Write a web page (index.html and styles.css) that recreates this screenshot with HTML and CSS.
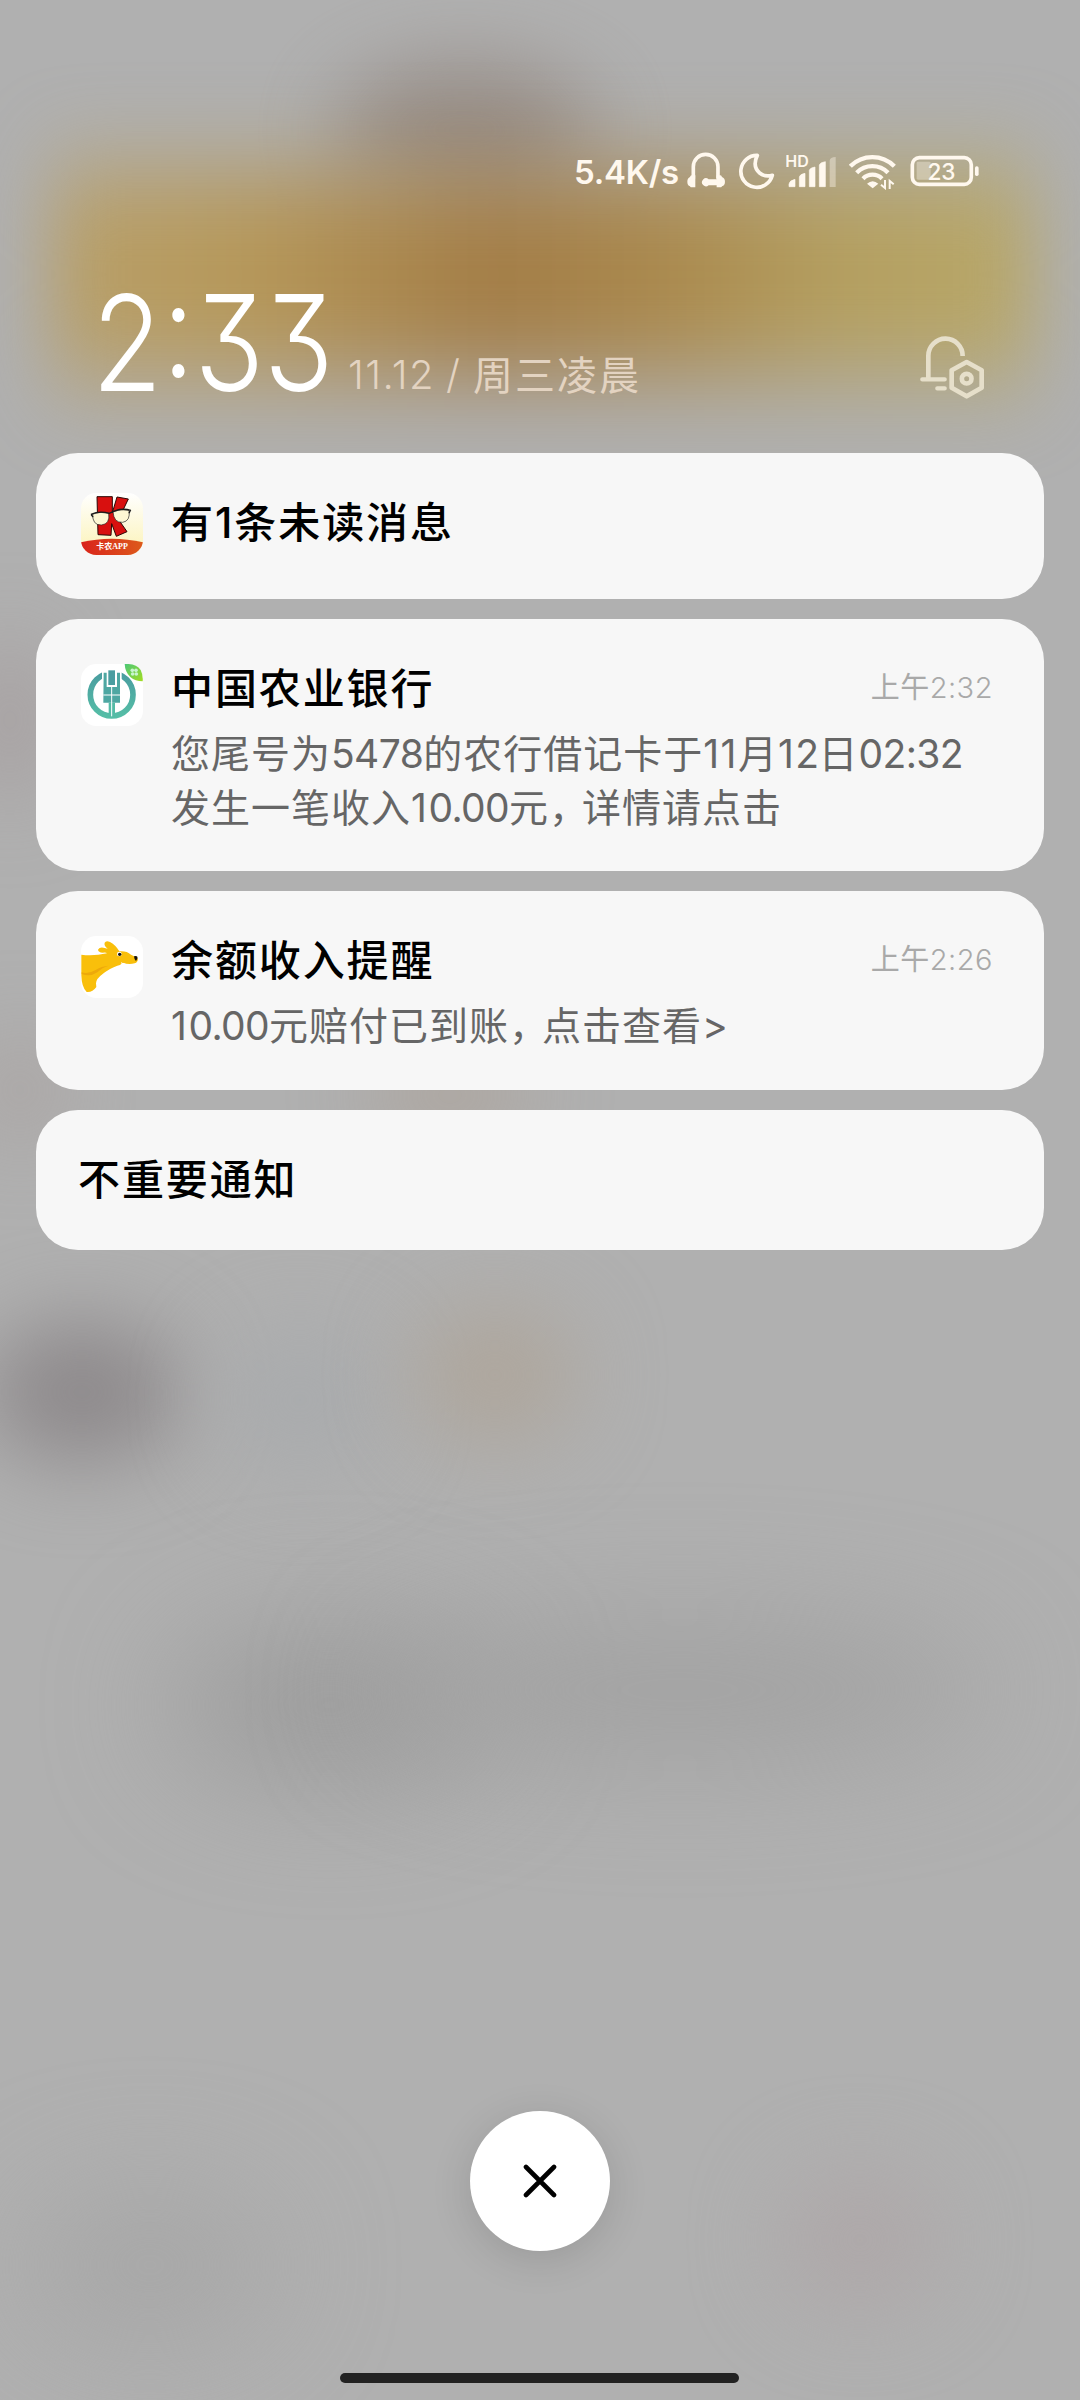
FILE: index.html
```html
<!DOCTYPE html>
<html lang="zh-CN">
<head>
<meta charset="utf-8">
<title>通知中心</title>
<link rel="stylesheet" href="styles.css">
</head>
<body>
<div class="screen">
  <svg class="backdrop" viewBox="0 0 1080 2400" aria-hidden="true">
    <defs>
      <filter id="soft" x="-150%" y="-150%" width="400%" height="400%" color-interpolation-filters="sRGB"><feGaussianBlur stdDeviation="42"/></filter>
      <filter id="softer" x="-150%" y="-200%" width="400%" height="500%" color-interpolation-filters="sRGB"><feGaussianBlur stdDeviation="60"/></filter>
      <filter id="band" x="-50%" y="-100%" width="200%" height="300%" color-interpolation-filters="sRGB"><feGaussianBlur stdDeviation="34 46"/></filter>
      <linearGradient id="gold" x1="0" x2="1" y1="0" y2="0">
        <stop offset="0" stop-color="#b8a06a"/><stop offset=".2" stop-color="#b6985a"/>
        <stop offset=".45" stop-color="#a37d47"/><stop offset=".62" stop-color="#aa894e"/>
        <stop offset=".8" stop-color="#b49f60"/><stop offset="1" stop-color="#b8a86a"/>
      </linearGradient>
    </defs>
    <rect width="1080" height="2400" fill="#b0b0b0"/>
    <ellipse cx="465" cy="130" rx="130" ry="65" fill="#8f837b" opacity=".8" filter="url(#soft)"/>
    <rect x="50" y="172" width="985" height="205" fill="url(#gold)" filter="url(#band)"/>
    <ellipse cx="10" cy="720" rx="30" ry="80" fill="#a39a9b" filter="url(#soft)"/>
    <ellipse cx="20" cy="1090" rx="30" ry="50" fill="#a8a09e" filter="url(#soft)"/>
    <ellipse cx="450" cy="1095" rx="80" ry="20" fill="#aa9a8c" filter="url(#soft)"/>
    <ellipse cx="82" cy="1392" rx="100" ry="70" fill="#8d898b" filter="url(#soft)"/>
    <ellipse cx="300" cy="1400" rx="80" ry="70" fill="#a9abad" filter="url(#soft)"/>
    <ellipse cx="495" cy="1375" rx="80" ry="70" fill="#aea69c" filter="url(#soft)"/>
    <ellipse cx="330" cy="1705" rx="160" ry="75" fill="#9c9c9c" filter="url(#softer)"/>
    <ellipse cx="680" cy="1690" rx="310" ry="65" fill="#a1a1a1" filter="url(#softer)"/>
    <ellipse cx="150" cy="2265" rx="120" ry="70" fill="#a6a6a6" filter="url(#softer)"/>
    <ellipse cx="860" cy="2240" rx="80" ry="70" fill="#aea8a9" filter="url(#soft)"/>
  </svg>

  <header class="status">
    <span class="speed">5.4K/s</span>
    <svg class="ic headset" viewBox="380 60 115 120">
      <path d="M399 146V110a37 37 0 0 1 74 0V146" fill="none" stroke="#fff8ee" stroke-width="11"/>
      <path d="M405 136v36h-13q-2 0-3-3q-8-3-8-14t8-14q1-5 5-5z" fill="#fff8ee"/>
      <path d="M469 136v12h-24a12 12 0 1 0 0 18h24v6h13q2 0 3-3q9-3 9-14t-9-14q-1-5-5-5z" fill="#fff8ee"/>
    </svg>
    <svg class="ic moon" viewBox="537 60 108 120">
      <path d="M592 76a48 48 0 1 0 45 60q-22 6-38-7-23-20-7-53z" fill="none" stroke="#fff8ee" stroke-width="11" stroke-linejoin="round"/>
    </svg>
    <svg class="ic signal" viewBox="678 60 152 120">
      <text x="676" y="112" class="hd">HD</text>
      <path d="M687 170v-8q1-10 18-14v22zM718 170v-29q1-8 17-11v40zM748 170v-49q2-8 17-10v59zM778 170v-65q2-8 18-10v75z" fill="#fff8ee" stroke="#fff8ee" stroke-width="2" stroke-linejoin="round"/>
      <path d="M809 171V92q1-11 18-11v90z" fill="#fff8ee" opacity=".4"/>
    </svg>
    <svg class="ic wifi" viewBox="866 60 140 120">
      <g fill="none" stroke="#fff8ee" stroke-width="13">
        <path d="M870 109a93 93 0 0 1 132 0"/>
        <path d="M889 128a66 66 0 0 1 94 0"/>
        <path d="M908 146a40 40 0 0 1 57 0"/>
      </g>
      <path d="M920 161q17-15 34 0l-17 14z" fill="#fff8ee"/>
      <path d="M974 150v24l-12-10M988 177v-24l12 10" fill="none" stroke="#fff8ee" stroke-width="6"/>
    </svg>
    <svg class="ic battery" viewBox="1048 60 208 120">
      <rect x="1068" y="95" width="42" height="54" rx="4" fill="#fff8ee" opacity=".35"/>
      <rect x="1055" y="83" width="177" height="80" rx="21" fill="none" stroke="#fff8ee" stroke-width="11"/>
      <rect x="1243" y="109" width="11" height="29" rx="5" fill="#fff8ee"/>
      <text x="1142" y="150" text-anchor="middle" class="level">23</text>
    </svg>
  </header>

  <section class="heading">
    <div class="clock"><span class="clock-text">2:33</span></div>
    <div class="date"><span class="d-num">11.12</span><span class="d-slash">/</span><span>周三凌晨</span></div>
    <svg class="bell" viewBox="60 48 195 192" fill="none" stroke="#e6dfca" stroke-width="14">
      <path d="M85 178V107a48 48 0 0 1 103 1" stroke-linejoin="round"/>
      <path d="M67 178H134M112 205H134" stroke-linecap="round" stroke-width="13"/>
      <path d="M200 126l45 25v52l-45 26-45-26v-52z" stroke-linejoin="round"/>
      <circle cx="200" cy="176" r="14.500"/>
    </svg>
  </section>

  <main class="list">
    <article class="card first">
      <svg class="app" viewBox="154 160 186 186">
        <defs>
          <linearGradient id="cream" x1="0" x2="0" y1="0" y2="1"><stop offset="0" stop-color="#fff"/><stop offset=".8" stop-color="#fcf5c4"/></linearGradient>
          <linearGradient id="flame" x1="0" x2="1" y1="0" y2="0"><stop offset="0" stop-color="#d9231b"/><stop offset="1" stop-color="#dd5a1c"/></linearGradient>
          <clipPath id="tile"><rect x="154" y="160" width="186" height="186" rx="46"/></clipPath>
        </defs>
        <g clip-path="url(#tile)">
          <rect x="154" y="160" width="186" height="186" fill="url(#cream)"/>
          <path d="M154 308q92-22 186 0v40H154z" fill="url(#flame)"/>
          <path d="M202 171h46v48l14-47 34 6-22 46-10 12 28 40-32 14-14-38-2 35-39-2z" fill="#d8100f" stroke="#2b0705" stroke-width="3"/>
          <g fill="#fdf8d4" stroke="#222" stroke-width="2">
            <path d="M189 223q24-9 48-2q5 32-22 35q-27 1-26-33z"/>
            <path d="M250 216q24-10 48-4q5 32-19 36q-27 2-29-32z"/>
          </g>
          <path d="M184 224q26-12 55-3l11-5q27-12 53-4M184 224l6 8M303 210l-5 11" fill="none" stroke="#1b1b1b" stroke-width="4"/>
          <text x="247" y="329" text-anchor="middle" class="logo-text">卡农APP</text>
        </g>
      </svg>
      <div class="body"><h2 class="title">有<span class="one">1</span>条未读消息</h2></div>
    </article>

    <article class="card">
      <svg class="app" viewBox="154 163 186 186">
        <defs>
          <linearGradient id="teal" x1="0" x2="0" y1="0" y2="1"><stop offset="0" stop-color="#4a9da0"/><stop offset="1" stop-color="#55bda6"/></linearGradient>
          <linearGradient id="leaf" x1="0" x2="1" y1="0" y2="1"><stop offset="0" stop-color="#4cc878"/><stop offset="1" stop-color="#a2dc22"/></linearGradient>
        </defs>
        <rect x="154" y="163" width="186" height="186" rx="46" fill="#fff"/>
        <circle cx="246" cy="255" r="64" fill="none" stroke="url(#teal)" stroke-width="17"/>
        <path d="M217 176h59v56h-59z" fill="#fff"/>
        <path d="M222 189h9v43h31v-43h9v90h-50z" fill="#4ea7a2"/>
        <rect x="236" y="182" width="20" height="44" fill="#4a9da0"/>
        <path d="M237 279h19v42h-19z" fill="#54bba6"/>
        <path d="M221 256h50M246 232v88" stroke="#fff" stroke-width="3"/>
        <path d="M285 163q34-2 48 18q8 16 6 34q-22 0-37-13q-16-15-17-39z" fill="url(#leaf)"/>
        <g fill="#c9f5cf"><circle cx="308" cy="182" r="5.500"/><circle cx="319" cy="182" r="5.500"/><circle cx="309" cy="193" r="5.500"/><circle cx="320" cy="193" r="5.500"/></g>
      </svg>
      <div class="body">
        <div class="row"><h2 class="title">中国农业银行</h2><time class="time">上午<span>2:32</span></time></div>
        <p class="text">您尾号为<span class="num">5478</span>的农行借记卡于<span class="num"><b>11</b></span>月<span class="num"><b>1</b>2</span>日<span class="num">02:32</span><br>发生一笔收入<span class="num"><b>1</b>0.00</span>元<span class="comma">，</span>详情请点击</p>
      </div>
    </article>

    <article class="card">
      <svg class="app" viewBox="32 48 186 186">
        <rect x="32" y="48" width="186" height="186" rx="46" fill="#fff"/>
        <path d="M33 105q35 5 77-4-3-4-13-2-13-1-14-9 5-9 20-5l9 2q-12-9-9-18 4-8 16-2 18 10 28 28 22-2 35 10 17 7 21 12 0 10-10 14-18 5-36-2-7 8-16 9-26 9-45 26-18 13-19 27l1 11q-12 17-29 15-15-14-16-50z" transform="translate(0 -1)" fill="#f9bf0b"/>
        <path d="M34 157q20 6 42-7 18-12 39-13-22 7-34 20-22 15-47 5z" fill="#eda90a"/>
        <path d="M191 109q13-3 10 7l-4 7q-6-6-6-14z" fill="#17120b"/>
        <circle cx="147" cy="102" r="7" fill="#fff"/><circle cx="148" cy="103" r="5" fill="#151515"/>
        <path d="M152 128q5 5 13 4" fill="none" stroke="#fff" stroke-width="3"/>
      </svg>
      <div class="body">
        <div class="row"><h2 class="title">余额收入提醒</h2><time class="time">上午<span>2:26</span></time></div>
        <p class="text"><span class="num"><b>1</b>0.00</span>元赔付已到账<span class="comma">，</span>点击查看<span class="num">&gt;</span></p>
      </div>
    </article>

    <article class="card plain"><h2 class="title">不重要通知</h2></article>
  </main>

  <footer class="bottom">
    <button class="close" aria-label="清除全部">
      <svg viewBox="0 0 34 34"><path d="M3 3L31 31M31 3L3 31" stroke="#000" stroke-width="4.600" stroke-linecap="round"/></svg>
    </button>
    <div class="homebar"></div>
  </footer>
</div>
</body>
</html>
```
FILE: styles.css
```css
* { box-sizing: border-box; margin: 0; padding: 0; }

body {
  background: #b0b0b0;
  font-family: "Noto Sans CJK SC", sans-serif;
}

.screen {
  position: relative;
  width: 1080px;
  height: 2400px;
  overflow: hidden;
  display: flex;
  flex-direction: column;
}

.backdrop { position: absolute; inset: 0; width: 1080px; height: 2400px; }
.status, .heading, .list, .bottom { position: relative; }

.status {
  display: flex;
  align-items: center;
  justify-content: flex-end;
  height: 40px;
  margin-top: 150px;
  padding-right: 101px;
  color: #fff8ee;
}
.speed {
  font: 600 33px/40px Inter, sans-serif;
  letter-spacing: -0.2px;
  padding-top: 3px;
  margin-right: 8px;
}
.ic { height: 40px; flex: none; }
.headset { width: 38.3px; margin-right: 14px; }
.moon { width: 36px; margin-right: 11px; }
.signal { width: 50.7px; margin-right: 12px; }
.wifi { width: 46.700px; margin-right: 14px; }
.battery { width: 69.3px; }
.hd { font: 600 48px Inter, sans-serif; fill: #fff8ee; }
.level { font: 500 68px Inter, sans-serif; fill: #fff8ee; letter-spacing: -1px; }

.heading {
  display: flex;
  align-items: flex-end;
  height: 263px;
  padding: 0 95px 48px 92px;
}
.clock { width: 256px; height: 132px; }
.clock-text {
  display: inline-block;
  transform: scaleX(.86);
  transform-origin: 0 50%;
  font: 270 133px/140px Inter, sans-serif;
  font-feature-settings: "cv09";
  color: #fff;
  white-space: nowrap;
}
.date {
  display: flex;
  height: 62px;
  font-size: 40px;
  line-height: 60px;
  font-weight: 400;
  letter-spacing: 2px;
  color: #e3d3c1;
}
.d-num, .d-slash { font-family: Inter, sans-serif; font-weight: 350; line-height: 63px; }
.d-num { letter-spacing: 1.500px; }
.d-slash { margin: 0 11px 0 11px; }
.bell { width: 65px; height: 64px; margin-left: auto; margin-bottom: 5px; }

.list { display: flex; flex-direction: column; gap: 20px; padding: 0 36px; }
.card {
  display: flex;
  gap: 28px;
  min-height: 140px;
  padding: 37px 51px 37px 45px;
  border-radius: 42px;
  background: rgba(250, 250, 250, .96);
}
.card.first { min-height: 146px; }
.card.plain { padding-left: 42px; }
.app { width: 62px; height: 62px; flex: none; margin-top: 8px; }
.first .app { margin-top: 3px; }
.logo-text { font: 700 24px "Liberation Serif", "Noto Sans CJK SC", serif; fill: #fff; }

.body { flex: 1; display: flex; flex-direction: column; gap: 9px; }
.row { display: flex; justify-content: space-between; height: 60px; }
.title {
  font-size: 42px;
  line-height: 60px;
  font-weight: 500;
  letter-spacing: 1.900px;
  color: #000;
  white-space: nowrap;
}
.one { font-family: Inter, sans-serif; line-height: 1; letter-spacing: 2px; }
.time { font-size: 29px; line-height: 58px; font-weight: 400; letter-spacing: .5px; color: #a9a9a9; }
.time span { font-family: Inter, sans-serif; font-weight: 350; line-height: 1; }
.text {
  font-size: 39px;
  line-height: 53.500px;
  padding-bottom: 2px;
  font-weight: 400;
  letter-spacing: 1px;
  color: #666;
  white-space: nowrap;
}
.num { font-family: Inter, sans-serif; line-height: 1; letter-spacing: -0.6px; }
.num b { font-weight: 400; letter-spacing: 1.5px; }
.comma { letter-spacing: -6px; }

.bottom {
  margin-top: auto;
  display: flex;
  flex-direction: column;
  align-items: center;
  gap: 122px;
  padding-bottom: 17px;
}
.close {
  width: 140px;
  height: 140px;
  border: 0;
  border-radius: 50%;
  background: #fff;
  box-shadow: 0 8px 40px rgba(0, 0, 0, .13);
  display: flex;
  align-items: center;
  justify-content: center;
}
.close svg { width: 34px; height: 34px; }
.homebar { width: 399px; height: 10px; margin-right: 2px; border-radius: 5px; background: #222; }
```
